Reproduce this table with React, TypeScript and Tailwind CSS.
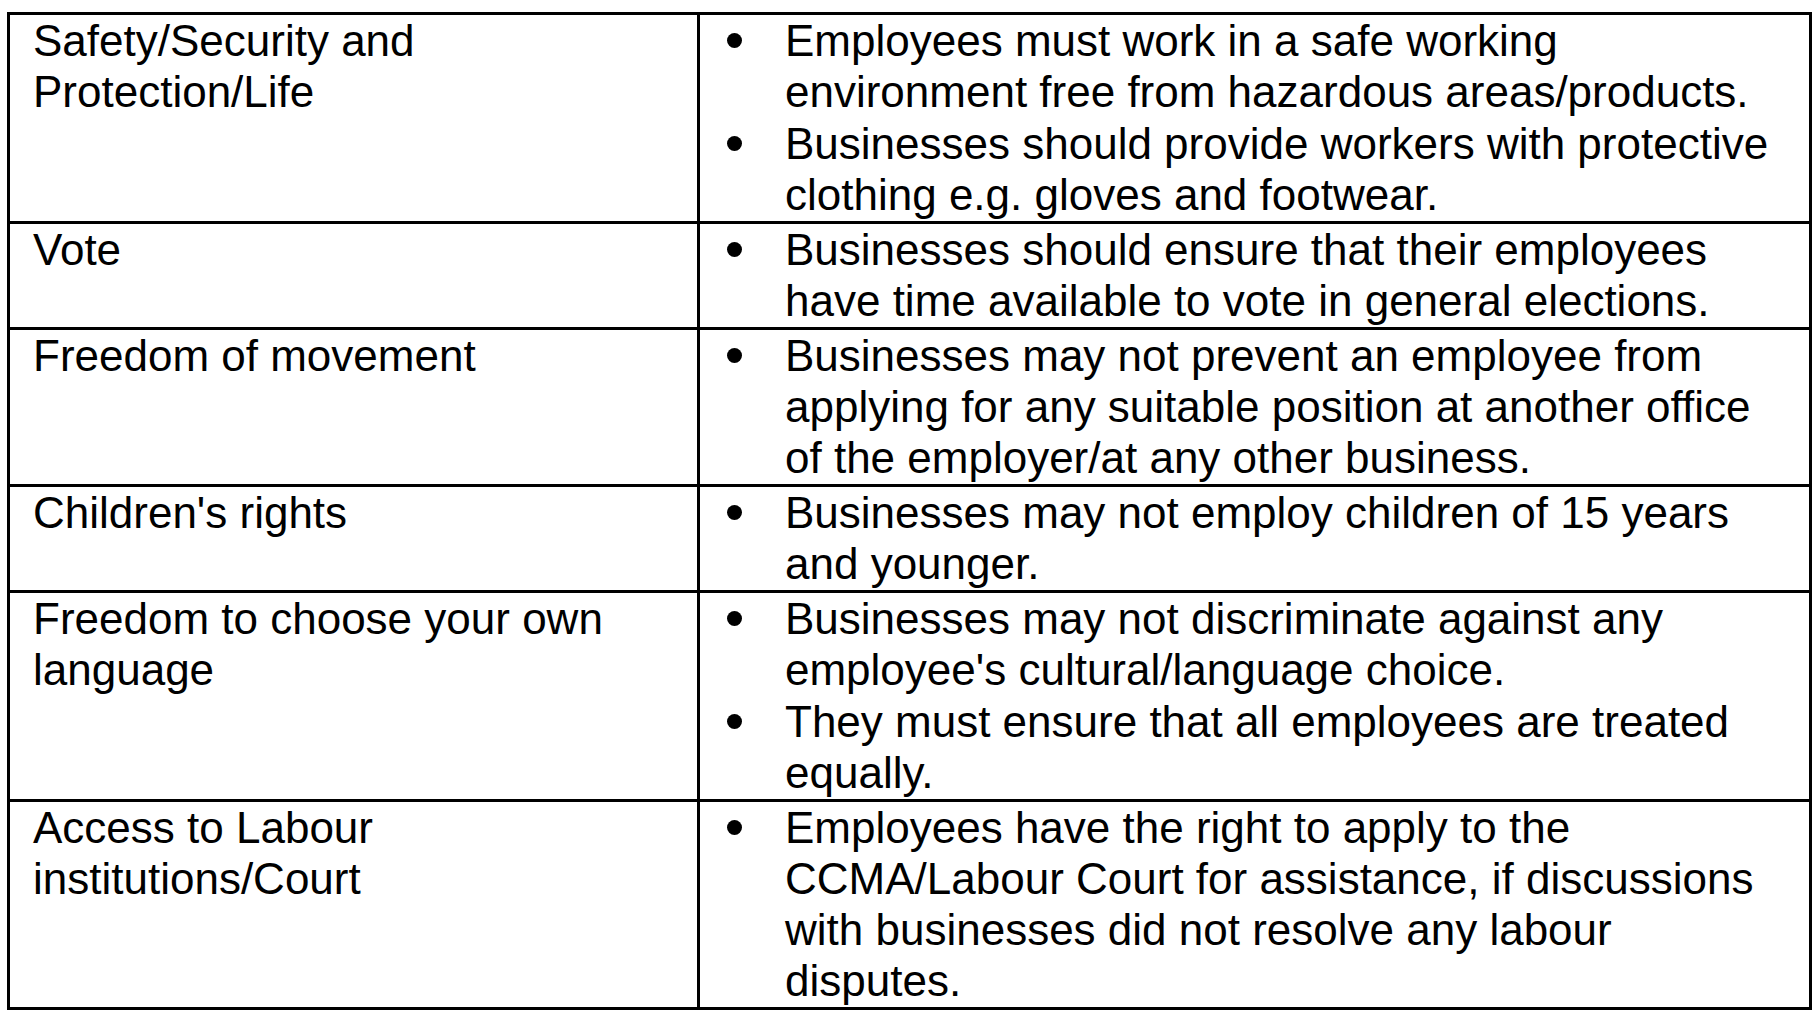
const ROWS: { right: string; items: string[] }[] = [
  {
    right: 'Safety/Security and Protection/Life',
    items: [
      'Employees must work in a safe working environment free from hazardous areas/products.',
      'Businesses should provide workers with protective clothing e.g. gloves and footwear.',
    ],
  },
  {
    right: 'Vote',
    items: ['Businesses should ensure that their employees have time available to vote in general elections.'],
  },
  {
    right: 'Freedom of movement',
    items: [
      'Businesses may not prevent an employee from applying for any suitable position at another office of the employer/at any other business.',
    ],
  },
  {
    right: "Children's rights",
    items: ['Businesses may not employ children of 15 years and younger.'],
  },
  {
    right: 'Freedom to choose your own language',
    items: [
      "Businesses may not discriminate against any employee's cultural/language choice.",
      'They must ensure that all employees are treated equally.',
    ],
  },
  {
    right: 'Access to Labour institutions/Court',
    items: [
      'Employees have the right to apply to the CCMA/Labour Court for assistance, if discussions with businesses did not resolve any labour disputes.',
    ],
  },
];

export default function App() {
  return (
    <div className="min-h-screen bg-white pl-[7px] pt-[12px]">
      <table className="w-[1805px] table-fixed border-collapse font-['Liberation_Sans',Arial,sans-serif] text-[44px] leading-[51px] text-black">
        <colgroup>
          <col className="w-[690px]" />
          <col />
        </colgroup>
        <tbody>
          {ROWS.map((r) => (
            <tr key={r.right}>
              <td className="border-[3px] border-black pb-[1px] pl-[23px] pr-[20px] pt-0 align-top">{r.right}</td>
              <td className="border-[3px] border-black pb-[1px] pl-[27px] pr-[30px] pt-0 align-top">
                <ul className="space-y-[1px]">
                  {r.items.map((it) => (
                    <li key={it} className="flex">
                      <span className="w-[58px] shrink-0">
                        <span className="mt-[18px] block h-[15px] w-[15px] rounded-full bg-black" />
                      </span>
                      <span>{it}</span>
                    </li>
                  ))}
                </ul>
              </td>
            </tr>
          ))}
        </tbody>
      </table>
    </div>
  );
}
